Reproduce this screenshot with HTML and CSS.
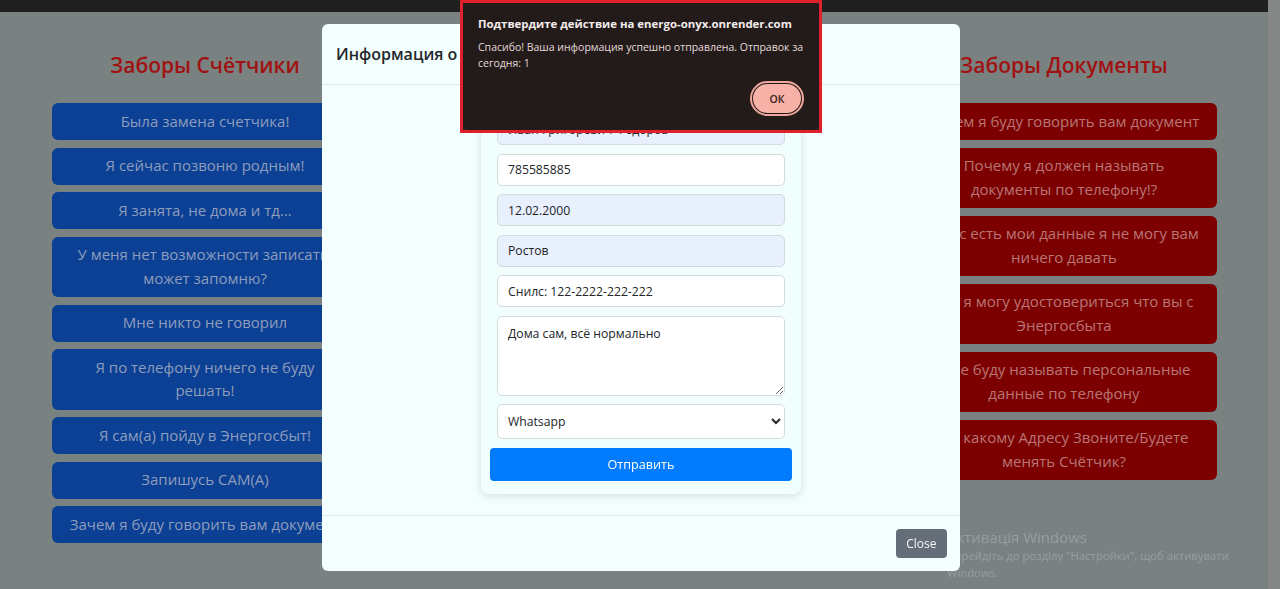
FILE: index.html
```html
<!DOCTYPE html>
<html lang="ru">
<head>
<meta charset="utf-8">
<title>Заборы</title>
<link rel="stylesheet" href="styles.css">
</head>
<body>
<div class="viewport">
  <div class="page">
    <div class="topbar"></div>
    <div class="columns">
      <section class="col">
        <h2 class="col-title">Заборы Счётчики</h2>
        <div class="btn-list">
          <button class="qbtn blue">Была замена счетчика!</button>
          <button class="qbtn blue">Я сейчас позвоню родным!</button>
          <button class="qbtn blue">Я занята, не дома и тд...</button>
          <button class="qbtn blue">У меня нет возможности записать, может запомню?</button>
          <button class="qbtn blue">Мне никто не говорил</button>
          <button class="qbtn blue">Я по телефону ничего не буду решать!</button>
          <button class="qbtn blue">Я сам(а) пойду в Энергосбыт!</button>
          <button class="qbtn blue">Запишусь САМ(А)</button>
          <button class="qbtn blue">Зачем я буду говорить вам документ</button>
        </div>
      </section>
      <section class="col col-mid"></section>
      <section class="col">
        <h2 class="col-title">Заборы Документы</h2>
        <div class="btn-list">
          <button class="qbtn red">Зачем я буду говорить вам документ</button>
          <button class="qbtn red">Почему я должен называть документы по телефону!?</button>
          <button class="qbtn red">У вас есть мои данные я не могу вам ничего давать</button>
          <button class="qbtn red">Как я могу удостовериться что вы с Энергосбыта</button>
          <button class="qbtn red">Я не буду называть персональные данные по телефону</button>
          <button class="qbtn red">По какому Адресу Звоните/Будете менять Счётчик?</button>
        </div>
      </section>
    </div>
  </div>
  <div class="scrollbar"></div>
</div>

<div class="modal">
  <div class="modal-dialog">
    <div class="modal-header">
      <h5 class="modal-title">Информация о клиенте</h5>
    </div>
    <div class="modal-body">
      <form class="card">
        <input class="field autofill" type="text" value="Иван Григоревич Федоров">
        <input class="field" type="text" value="785585885">
        <input class="field autofill" type="text" value="12.02.2000">
        <input class="field autofill" type="text" value="Ростов">
        <input class="field" type="text" value="Снилс: 122-2222-222-222">
        <textarea class="field area">Дома сам, всё нормально</textarea>
        <select class="field select">
          <option>Whatsapp</option>
          <option>Telegram</option>
          <option>Viber</option>
        </select>
        <button type="button" class="submit">Отправить</button>
      </form>
    </div>
    <div class="modal-footer">
      <button type="button" class="btn-close">Close</button>
    </div>
  </div>
</div>

<div class="alert-frame">
  <div class="alert">
    <div class="alert-title">Подтвердите действие на energo-onyx.onrender.com</div>
    <div class="alert-msg">Спасибо! Ваша информация успешно отправлена. Отправок за сегодня: 1</div>
    <div class="alert-actions">
      <button type="button" class="alert-ok">ОК</button>
    </div>
  </div>
</div>

<div class="watermark">
  <div class="wm-title">Активація Windows</div>
  <div class="wm-text">Перейдіть до розділу "Настройки", щоб активувати Windows.</div>
</div>
</body>
</html>
```

FILE: styles.css
```css
* { box-sizing: border-box; }

html, body {
  margin: 0;
  height: 100%;
}

body {
  font-family: "Open Sans", "Noto Sans", sans-serif;
  background: #7a8281;
  overflow: hidden;
}

.viewport {
  display: flex;
  height: 100%;
}

.page {
  flex: 1;
  display: flex;
  flex-direction: column;
}

.scrollbar {
  width: 12px;
  background: #858686;
}

.topbar {
  height: 12px;
  background: #1f1f1f;
}

.columns {
  display: flex;
  justify-content: space-between;
  padding: 0 51px 0 52px;
}

.col {
  width: 306px;
  display: flex;
  flex-direction: column;
}

.col-mid { flex: 1; }

.col-title {
  margin: 36px 0 0;
  height: 55px;
  text-align: center;
  font-size: 21px;
  font-weight: 600;
  line-height: 34px;
  color: #a01212;
}

.btn-list {
  display: flex;
  flex-direction: column;
  gap: 7.5px;
}

.qbtn {
  font-family: inherit;
  font-size: 15px;
  line-height: 23.5px;
  padding: 6.75px 12px;
  border: 0;
  border-radius: 6px;
  text-align: center;
  width: 100%;
}

.qbtn.blue {
  background: #0b4094;
  color: #8e9dbb;
}

.qbtn.red {
  background: #7c0000;
  color: #b87676;
}

/* Modal */
.modal {
  position: fixed;
  inset: 0;
  display: flex;
  justify-content: center;
  align-items: flex-start;
  padding: 24px 0 0 2px;
}

.modal-dialog {
  width: 638px;
  height: 547px;
  background: #f3ffff;
  border-radius: 6px;
  display: flex;
  flex-direction: column;
}

.modal-header {
  padding: 16px 14px;
  border-bottom: 1px solid #dfe6e6;
}

.modal-title {
  margin: 0;
  font-size: 16px;
  font-weight: 600;
  line-height: 28px;
  color: #23272b;
}

.modal-body {
  flex: 1;
  display: flex;
  justify-content: center;
  padding: 14px 0 0;
}

.card {
  width: 320px;
  height: 395px;
  padding: 14px 9px 13px;
  background: #f1fefe;
  border-radius: 8px;
  box-shadow: 0 2px 8px rgba(0, 0, 0, 0.13);
  display: flex;
  flex-direction: column;
  gap: 8.5px;
}

.field {
  margin: 0 7px;
  height: 32px;
  padding: 0 10px;
  font-family: inherit;
  font-size: 12.2px;
  color: #212529;
  background: #ffffff;
  border: 1px solid #d3dadb;
  border-radius: 5px;
}

.field.autofill {
  background: #e8effd;
}

.field.area {
  height: 80px;
  padding: 8px 10px;
  line-height: 18px;
  resize: vertical;
}

.field.select {
  height: 35px;
  padding: 0 6px;
}

.submit {
  height: 33px;
  border: 0;
  border-radius: 4px;
  background: #027bfd;
  color: #ffffff;
  font-family: inherit;
  font-size: 12.6px;
}

.modal-footer {
  height: 56px;
  border-top: 1px solid #dfe6e6;
  display: flex;
  justify-content: flex-end;
  align-items: flex-start;
  padding: 13px 13px 0;
}

.btn-close {
  height: 29px;
  padding: 0 10.5px;
  border: 0;
  border-radius: 4px;
  background: #656e78;
  color: #f3f5f7;
  font-family: inherit;
  font-size: 12px;
}

/* Browser confirm dialog */
.alert-frame {
  position: fixed;
  left: 460px;
  top: 0;
  width: 362px;
  height: 133px;
  border: 3px solid #e0202c;
  background: #2a2222;
}

.alert {
  height: 100%;
  background: #231a1a;
  border-radius: 0 0 8px 8px;
  padding: 12px 15px 0;
  color: #eee6e6;
}

.alert-title {
  font-size: 11.4px;
  font-weight: 700;
  line-height: 18px;
  white-space: nowrap;
  color: #f3ecec;
}

.alert-msg {
  margin-top: 6px;
  font-size: 10.5px;
  line-height: 16px;
  color: #e4dada;
}

.alert-actions {
  display: flex;
  justify-content: flex-end;
  margin-top: 11px;
  padding-right: 1px;
}

.alert-ok {
  width: 52px;
  height: 33px;
  border-radius: 17px;
  border: 2px solid #231a1a;
  outline: 2px solid #f0a79b;
  outline-offset: -1px;
  background: #f7b1a6;
  color: #3a2020;
  font-family: inherit;
  font-size: 10.5px;
  font-weight: 600;
}

/* Windows watermark */
.watermark {
  position: fixed;
  left: 947px;
  top: 527px;
  width: 300px;
  color: rgba(255, 255, 255, 0.22);
}

.wm-title {
  font-size: 15px;
  line-height: 20px;
}

.wm-text {
  font-size: 11.3px;
  line-height: 17px;
  width: 290px;
}
```
